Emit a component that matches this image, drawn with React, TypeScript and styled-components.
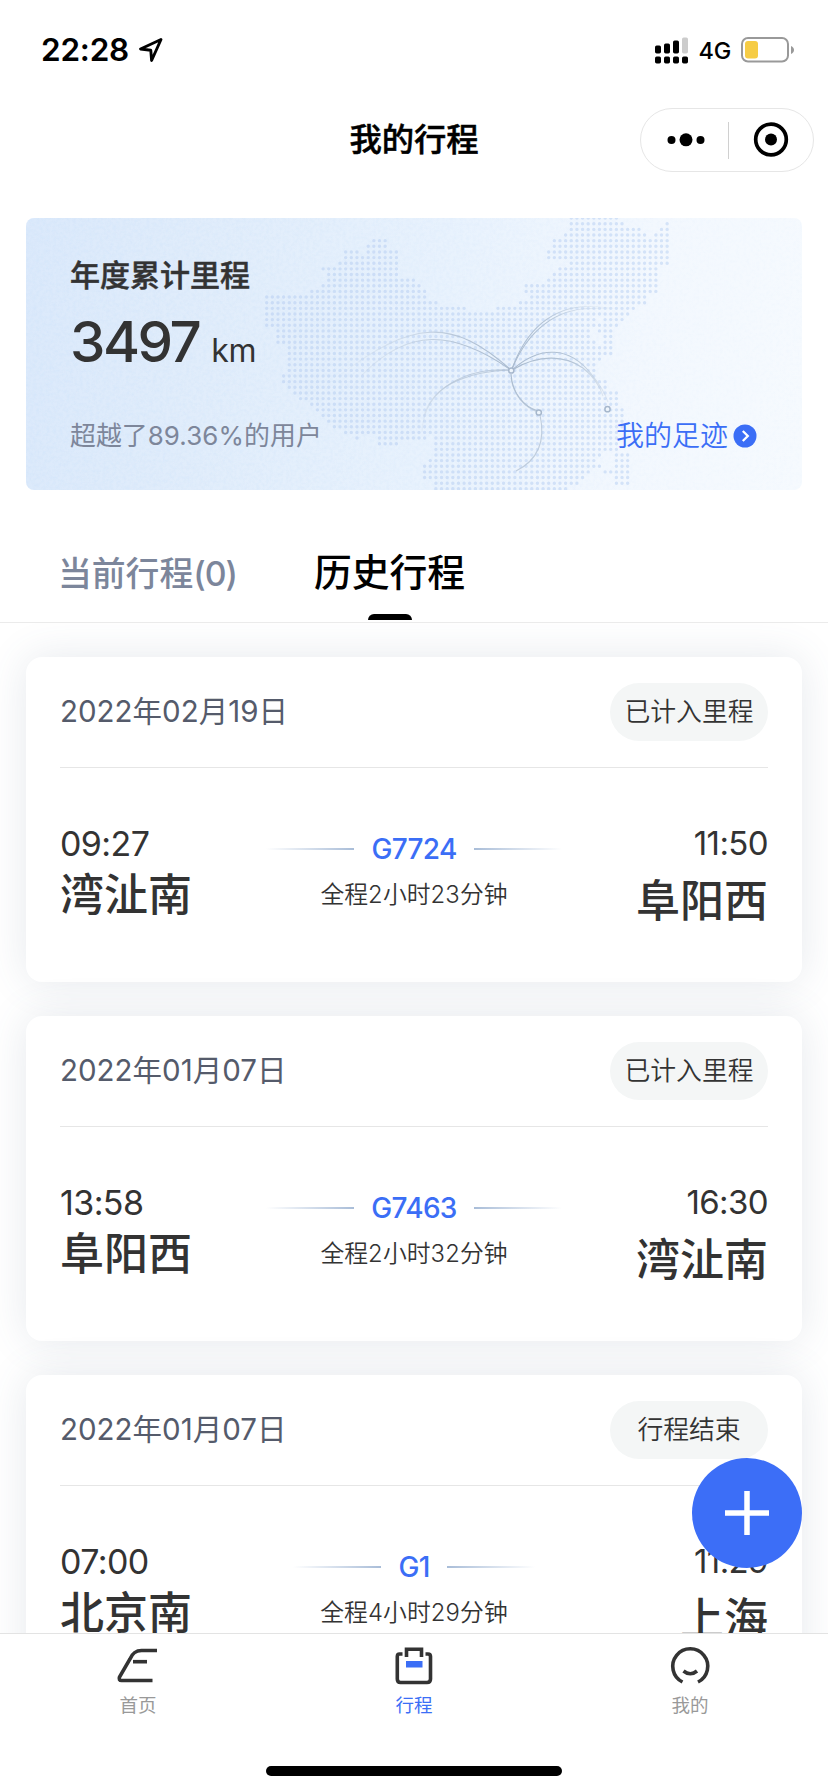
import React from "react";
import styled, { createGlobalStyle } from "styled-components";

const GlobalStyle = createGlobalStyle`
  * { box-sizing: border-box; }
  html, body { margin: 0; padding: 0; background: #fff; }
  body {
    font-family: Inter, "Noto Sans CJK SC", sans-serif;
    color: #333;
    -webkit-font-smoothing: antialiased;
  }
`;

const Screen = styled.div`
  position: relative;
  display: flex;
  flex-direction: column;
  width: 828px;
  height: 1792px;
  overflow: hidden;
  background: #fff;
`;

/* ---------- shared text ---------- */

const LatinRun = styled.span<{ $tracking: number }>`
  letter-spacing: ${(p) => p.$tracking}em;
`;

/* Adjusts the tracking of digits and latin letters that sit among Chinese characters. */
function Mixed({ children, tracking = 0 }: { children: string; tracking?: number }) {
  return (
    <>
      {children.split(/([\x20-\x7e]+)/).map((part, i) =>
        i % 2 ? (
          <LatinRun key={i} $tracking={tracking}>
            {part}
          </LatinRun>
        ) : (
          part
        )
      )}
    </>
  );
}

/* ---------- status bar ---------- */

const StatusBar = styled.header`
  flex: none;
  display: flex;
  align-items: center;
  justify-content: space-between;
  height: 100px;
  padding: 0 33px 0 41px;
`;

const StatusGroup = styled.div`
  display: flex;
  align-items: center;
`;

const Clock = styled.span`
  font-size: 31.5px;
  font-weight: 600;
  letter-spacing: -0.2px;
  line-height: 40px;
  color: #000;
  margin-right: 9px;
`;

const Network = styled.span`
  font-size: 23.5px;
  font-weight: 500;
  line-height: 30px;
  letter-spacing: -0.3px;
  color: #000;
  margin: 2px 10px 0 10px;
`;

/* ---------- nav bar ---------- */

const NavBar = styled.div`
  flex: none;
  display: grid;
  grid-template-columns: 1fr auto 1fr;
  align-items: center;
  height: 80px;
  padding-right: 14px;
  padding-left: 14px;
`;

const NavTitle = styled.h1`
  grid-column: 2;
  margin: 0;
  font-size: 32.3px;
  line-height: 44px;
  font-weight: 500;
  -webkit-text-stroke: 0.5px currentColor;
  color: #000;
`;

const Capsule = styled.div`
  justify-self: end;
  display: flex;
  align-items: center;
  width: 174px;
  height: 64px;
  border: 1px solid #e6e6e6;
  border-radius: 32px;
`;

const CapsuleHalf = styled.div`
  flex: 1;
  display: flex;
  justify-content: center;
  padding-left: 3px;
  & + & {
    height: 37px;
    padding-left: 1px;
    align-items: center;
    border-left: 1px solid #d0d0d0;
  }
`;

/* ---------- mileage card ---------- */

const Mileage = styled.section`
  flex: none;
  position: relative;
  height: 272px;
  margin: 38px 26px 0;
  padding: 35px 45px 0 44px;
  border-radius: 8px;
  overflow: hidden;
  background: linear-gradient(97deg, #dbe9fb 0%, #e1edfb 25%, #e8f2fd 52%, #f3f8fe 78%, #f6fafe 100%);
`;

const MapArt = styled.svg`
  position: absolute;
  inset: 0;
`;

const MileageBody = styled.div`
  position: relative;
  display: flex;
  flex-direction: column;
`;

const MileageTitle = styled.h2`
  margin: 0;
  font-size: 30px;
  line-height: 44px;
  font-weight: 500;
  -webkit-text-stroke: 0.5px currentColor;
`;

const MileageValue = styled.div`
  display: flex;
  align-items: baseline;
  height: 70px;
  line-height: 70px;
  margin-top: 10px;
`;

const Distance = styled.span`
  font-size: 56.5px;
  font-weight: 550;
  letter-spacing: -2.5px;
`;

const Unit = styled.span`
  margin-left: 12px;
  font-size: 32px;
  font-weight: 370;
  letter-spacing: -0.3px;
`;

const MileageFooter = styled.div`
  display: flex;
  align-items: center;
  justify-content: space-between;
  height: 40px;
  margin-top: 39px;
`;

const Rank = styled.span`
  font-size: 25.9px;
  line-height: 36px;
  font-weight: 370;
  color: #7d869a;
`;

const FootprintLink = styled.a`
  display: flex;
  align-items: center;
  gap: 5px;
  font-size: 28px;
  line-height: 38px;
  font-weight: 350;
  color: #3b6ef6;
`;

/* ---------- tabs ---------- */

const Tabs = styled.nav`
  flex: none;
  display: flex;
  height: 133px;
  padding-left: 58px;
  border-bottom: 1px solid #ebebeb;
`;

const Tab = styled.div<{ $active?: boolean }>`
  position: relative;
  height: 132px;
  padding-top: ${(p) => (p.$active ? 56 : 58)}px;
  margin-right: 77px;
  font-size: ${(p) => (p.$active ? 37.8 : 33.8)}px;
  line-height: 52px;
  font-weight: 500;
  color: ${(p) => (p.$active ? "#000" : "#7c869b")};
  white-space: nowrap;
`;

const TabMark = styled.i`
  position: absolute;
  left: 50%;
  bottom: 2px;
  width: 44px;
  height: 6px;
  margin-left: -21px;
  border-radius: 6px 6px 0 0;
  background: #000;
`;

/* ---------- trips ---------- */

const TripList = styled.main`
  flex: 1;
  min-height: 0;
  overflow: hidden;
  display: flex;
  flex-direction: column;
  gap: 34px;
  padding: 34px 26px 0;
`;

const TripCard = styled.article`
  flex: none;
  height: 325px;
  padding: 0 34px;
  border-radius: 16px;
  background: #fff;
  box-shadow: 0 0 42px rgba(80, 100, 130, 0.14);
`;

const TripHead = styled.div`
  display: flex;
  align-items: center;
  justify-content: space-between;
  height: 111px;
  border-bottom: 1px solid #e6e6e6;
`;

const TripDate = styled.span`
  padding-bottom: 2px;
  font-size: 29.5px;
  line-height: 40px;
  font-weight: 370;
  color: #555b6b;
`;

const Badge = styled.span`
  display: flex;
  align-items: center;
  justify-content: center;
  width: 158px;
  height: 58px;
  border-radius: 29px;
  font-size: 25.8px;
  line-height: 36px;
  font-weight: 350;
  background: #f4f6f6;
`;

const Route = styled.div`
  display: grid;
  grid-template-columns: 1fr 300px 1fr;
  padding-top: 52px;
`;

const Stop = styled.div<{ $end?: boolean }>`
  display: flex;
  flex-direction: column;
  align-items: ${(p) => (p.$end ? "flex-end" : "flex-start")};
  gap: ${(p) => (p.$end ? 10 : 2)}px;
`;

const StopTime = styled.span<{ $end?: boolean }>`
  font-size: ${(p) => (p.$end ? 33 : 34)}px;
  line-height: ${(p) => (p.$end ? 46 : 48)}px;
  font-weight: 370;
  letter-spacing: -0.6px;
`;

const Station = styled.span`
  font-size: 44px;
  line-height: 50px;
  font-weight: 500;
  white-space: nowrap;
`;

const Middle = styled.div`
  display: flex;
  flex-direction: column;
  align-items: center;
  padding-top: 11px;
`;

const TrainRow = styled.div`
  display: flex;
  align-items: center;
  gap: 17px;
  height: 36px;
`;

const Train = styled.span`
  font-size: 28px;
  line-height: 36px;
  font-weight: 500;
  letter-spacing: -0.7px;
  color: #3b6ef6;
`;

const Fade = styled.i<{ $dir: "left" | "right" }>`
  width: 88px;
  height: 2px;
  background: linear-gradient(to ${(p) => p.$dir}, #a9bdd8, rgba(169, 189, 216, 0));
`;

const Duration = styled.span`
  margin-top: 12px;
  font-size: 23.8px;
  line-height: 32px;
  font-weight: 360;
`;

const AddButton = styled.button`
  position: absolute;
  left: 692px;
  top: 1458px;
  display: flex;
  width: 110px;
  height: 110px;
  padding: 0;
  border: 0;
  border-radius: 50%;
  background: #3c6ef7;
`;

/* ---------- bottom bar ---------- */

const BottomBar = styled.footer`
  flex: none;
  display: flex;
  flex-direction: column;
  align-items: center;
  justify-content: space-between;
  height: 159px;
  padding-bottom: 16px;
  border-top: 1px solid #e3e3e3;
  background: #fff;
`;

const BottomItems = styled.div`
  display: grid;
  grid-template-columns: repeat(3, 1fr);
  width: 100%;
`;

const BottomItem = styled.div<{ $active?: boolean }>`
  display: flex;
  flex-direction: column;
  align-items: center;
  padding-top: 9px;
  font-size: 18.5px;
  line-height: 28px;
  color: ${(p) => (p.$active ? "#3b6ef6" : "#999")};
  & > svg { margin-bottom: 6px; }
`;

const HomeIndicator = styled.div`
  width: 296px;
  height: 10px;
  border-radius: 5px;
  background: #000;
`;

/* ---------- map drawing ---------- */

/* Column spans filled with dots, one entry per dot row from top to bottom. */
const MAP_ROWS: number[][] = [
  [54, 62], [54, 63, 71, 71], [54, 66, 70, 71], [53, 67, 69, 71],
  [19, 21, 51, 71], [18, 21, 51, 71], [14, 16, 18, 23, 50, 71], [14, 23, 50, 71],
  [13, 23, 54, 71], [10, 23, 52, 69], [11, 23, 51, 69], [11, 26, 50, 69],
  [10, 27, 46, 69], [8, 28, 46, 69], [0, 28, 47, 67], [0, 30, 45, 67],
  [0, 35, 41, 65], [0, 64], [0, 58, 60, 63], [0, 62],
  [2, 57, 59, 61], [2, 57, 60, 61], [2, 58, 60, 61], [4, 61],
  [4, 61], [4, 59], [4, 58], [4, 58], [3, 58], [3, 60], [4, 60], [5, 62],
  [6, 62], [8, 62], [9, 63], [10, 63], [11, 63], [12, 63], [14, 62], [16, 16, 20, 28, 30, 62],
  [20, 23, 30, 62], [30, 62], [30, 59, 62, 64], [29, 58, 62, 64], [28, 59, 62, 64],
  [28, 57, 60, 61, 62, 64], [28, 56, 62, 64], [30, 55, 62, 64], [30, 53],
];
const PITCH = 5.64;

function dotSegments() {
  const segments: string[] = [];
  MAP_ROWS.forEach((spans, k) => {
    const y = (218.1 + k * PITCH).toFixed(2);
    for (let i = 0; i < spans.length; i += 2) {
      const x = (266.7 + spans[i] * PITCH).toFixed(2);
      const len = ((spans[i + 1] - spans[i]) * PITCH + 0.2).toFixed(2);
      segments.push(`M${x} ${y}h${len}`);
    }
  });
  return segments;
}

function ChinaMap() {
  return (
    <MapArt width="776" height="272" viewBox="26 218 776 272" fill="none">
      <defs>
        <linearGradient id="dotFade" gradientUnits="userSpaceOnUse" x1="266" y1="0" x2="670" y2="0">
          <stop offset="0" stopColor="#fff" />
          <stop offset="1" stopColor="#fff" stopOpacity=".75" />
        </linearGradient>
        <mask id="dotMask" maskUnits="userSpaceOnUse" x="26" y="218" width="776" height="272">
          <rect x="26" y="218" width="776" height="272" fill="url(#dotFade)" />
        </mask>
        <radialGradient id="arc" gradientUnits="userSpaceOnUse" cx="511" cy="370" r="178">
          <stop offset="0" stopColor="#a9bace" />
          <stop offset=".35" stopColor="#b6c5d7" />
          <stop offset="1" stopColor="#c8d5e4" stopOpacity="0" />
        </radialGradient>
        <radialGradient id="arcShort" gradientUnits="userSpaceOnUse" cx="511" cy="370" r="122">
          <stop offset="0" stopColor="#a9bace" />
          <stop offset=".5" stopColor="#b4c4d6" />
          <stop offset="1" stopColor="#c8d5e4" stopOpacity="0" />
        </radialGradient>
        <filter id="grain" x="0" y="0" width="100%" height="100%">
          <feTurbulence type="fractalNoise" baseFrequency="0.3" numOctaves="2" seed="4" />
          <feColorMatrix values="0 0 0 0 0.62  0 0 0 0 0.77  0 0 0 0 0.96  0 0 0 1.6 -0.62" />
        </filter>
        <linearGradient id="grainFade" x1="0" x2="1" y1="0" y2="0">
          <stop offset="0" stopColor="#fff" />
          <stop offset=".85" stopColor="#fff" stopOpacity=".15" />
        </linearGradient>
        <mask id="grainMask">
          <rect x="26" y="218" width="776" height="272" fill="url(#grainFade)" />
        </mask>
      </defs>
      <g mask="url(#grainMask)">
        <rect x="26" y="218" width="776" height="272" filter="url(#grain)" opacity=".6" />
      </g>
      <g mask="url(#dotMask)" stroke="#cadcf6" strokeWidth="3.4" strokeLinecap="round" strokeDasharray={`0 ${PITCH}`}>
        {dotSegments().map((d) => (
          <path key={d} d={d} />
        ))}
      </g>
      <g stroke="url(#arcShort)" strokeWidth="1.1">
        <path d="M512 369C526 330 552 306 590 306.500Q606 307 616 309" />
        <path d="M512 369C528 330 556 309 590 308.500Q602 308 612 308" />
        <path d="M512 370C540 345 570 346 592 375Q603 388 608 402" />
        <path d="M512 370C540 353 566 356 583 368Q598 380 603 396" />
        <path d="M511 370C470 368 424 385 422 432" strokeOpacity=".7" />
        <path d="M511 370C478 371 434 380 424 416" strokeOpacity=".7" />
        <path d="M511 374C512 393 524 407 538 411" />
        <path d="M511 378C514 397 526 408 538 412" strokeOpacity=".6" />
      </g>
      <g stroke="url(#arc)" strokeWidth="1.1">
        <path d="M511 370C452 317 412 320 337 377" />
        <path d="M511 370C452 329 408 328 362 375" />
      </g>
      <path d="M540 415C546 442 538 460 516 471" stroke="#b5c4d6" strokeWidth="1.1" strokeOpacity=".8" />
      <g stroke="#a6b7cc" strokeWidth="1.5" fill="#eef5fc">
        <circle cx="511.300" cy="370.500" r="2.600" />
        <circle cx="538.800" cy="412.500" r="2.600" />
        <circle cx="607.500" cy="409.200" r="2.600" />
      </g>
    </MapArt>
  );
}

/* ---------- data ---------- */

interface Trip {
  date: string;
  badge: string;
  from: [string, string];
  to: [string, string];
  train: string;
  duration: string;
}

const TRIPS: Trip[] = [
  { date: "2022年02月19日", badge: "已计入里程", from: ["09:27", "湾沚南"], to: ["11:50", "阜阳西"], train: "G7724", duration: "全程2小时23分钟" },
  { date: "2022年01月07日", badge: "已计入里程", from: ["13:58", "阜阳西"], to: ["16:30", "湾沚南"], train: "G7463", duration: "全程2小时32分钟" },
  { date: "2022年01月07日", badge: "行程结束", from: ["07:00", "北京南"], to: ["11:29", "上海"], train: "G1", duration: "全程4小时29分钟" },
];

function TripItem({ trip }: { trip: Trip }) {
  return (
    <TripCard>
      <TripHead>
        <TripDate><Mixed>{trip.date}</Mixed></TripDate>
        <Badge>{trip.badge}</Badge>
      </TripHead>
      <Route>
        <Stop>
          <StopTime>{trip.from[0]}</StopTime>
          <Station>{trip.from[1]}</Station>
        </Stop>
        <Middle>
          <TrainRow>
            <Fade $dir="left" />
            <Train>{trip.train}</Train>
            <Fade $dir="right" />
          </TrainRow>
          <Duration><Mixed tracking={0.01}>{trip.duration}</Mixed></Duration>
        </Middle>
        <Stop $end>
          <StopTime $end>{trip.to[0]}</StopTime>
          <Station>{trip.to[1]}</Station>
        </Stop>
      </Route>
    </TripCard>
  );
}

export default function App() {
  return (
    <Screen>
      <GlobalStyle />
      <StatusBar>
        <StatusGroup>
          <Clock>22:28</Clock>
          <svg width="26" height="26" viewBox="0 0 26 26" fill="none" stroke="#000" strokeWidth="2.9" strokeLinejoin="round">
            <path d="M23 2.500L2.500 12L12.800 13.300L13.600 23.500Z" />
          </svg>
        </StatusGroup>
        <StatusGroup>
          <svg width="34" height="27" viewBox="0 0 34 27" fill="#000">
            <rect x="0" y="8.500" width="6" height="8" rx="1.700" />
            <rect x="9" y="6.500" width="6" height="10" rx="1.700" />
            <rect x="18" y="3.500" width="6" height="13" rx="1.700" />
            <rect x="27" y="0.500" width="6" height="16" rx="1.700" fill="#ccc" />
            <rect x="0" y="19.500" width="6" height="7" rx="1.700" />
            <rect x="9" y="19.500" width="6" height="7" rx="1.700" />
            <rect x="18" y="19.500" width="6" height="7" rx="1.700" />
            <rect x="27" y="19.500" width="6" height="7" rx="1.700" />
          </svg>
          <Network>4G</Network>
          <svg width="54" height="26" viewBox="0 0 54 26" fill="none">
            <rect x="1" y="1" width="46" height="23.500" rx="6" stroke="#999" strokeWidth="2" />
            <rect x="4" y="4" width="13" height="17.500" rx="3" fill="#f6cc45" />
            <path d="M50 9C54 10.500 54 15.500 50 17Z" fill="#999" />
          </svg>
        </StatusGroup>
      </StatusBar>

      <NavBar>
        <NavTitle>我的行程</NavTitle>
        <Capsule>
          <CapsuleHalf>
            <svg width="38" height="14" viewBox="0 0 38 14">
              <circle cx="4.500" cy="7" r="4" />
              <circle cx="19" cy="6.800" r="6.500" />
              <circle cx="33.500" cy="7" r="4" />
            </svg>
          </CapsuleHalf>
          <CapsuleHalf>
            <svg width="36" height="36" viewBox="0 0 36 36">
              <circle cx="18" cy="17.500" r="15.300" fill="none" stroke="#000" strokeWidth="3.700" />
              <circle cx="18" cy="17.500" r="6" />
            </svg>
          </CapsuleHalf>
        </Capsule>
      </NavBar>

      <Mileage>
        <ChinaMap />
        <MileageBody>
          <MileageTitle>年度累计里程</MileageTitle>
          <MileageValue>
            <Distance>3497</Distance>
            <Unit>km</Unit>
          </MileageValue>
          <MileageFooter>
            <Rank><Mixed tracking={0.005}>超越了89.36%的用户</Mixed></Rank>
            <FootprintLink>
              我的足迹
              <svg width="24" height="24" viewBox="0 0 24 24" fill="none">
                <circle cx="12" cy="12" r="11.500" fill="#3b6ef6" />
                <path d="M9.800 7L14.800 12L9.800 17" stroke="#fff" strokeWidth="2.300" />
              </svg>
            </FootprintLink>
          </MileageFooter>
        </MileageBody>
      </Mileage>

      <Tabs>
        <Tab><Mixed tracking={-0.03}>当前行程(0)</Mixed></Tab>
        <Tab $active>
          历史行程
          <TabMark />
        </Tab>
      </Tabs>

      <TripList>
        {TRIPS.map((trip) => (
          <TripItem key={trip.train} trip={trip} />
        ))}
      </TripList>

      <AddButton aria-label="添加行程">
        <svg width="110" height="110" viewBox="0 0 110 110" stroke="#fff" strokeWidth="5.500">
          <path d="M33 55H77M55 33V77" />
        </svg>
      </AddButton>

      <BottomBar>
        <BottomItems>
          <BottomItem>
            <svg width="44" height="42" viewBox="0 0 44 42" fill="none" stroke="#333" strokeWidth="3.600">
              <path d="M41 7.500H25.500C19.500 7.500 16.500 10 14 16L3.500 34C2.700 36 3.500 37.500 5.500 37.500H36.500" />
              <path d="M17 18.700H31" />
            </svg>
            首页
          </BottomItem>
          <BottomItem $active>
            <svg width="44" height="42" viewBox="0 0 44 42" fill="none" stroke="#333" strokeWidth="3.600">
              <path d="M10.500 11H7.500Q5.300 11 5.300 13.500V36Q5.300 39.500 8.500 39.500H35Q38.500 39.500 38.500 36V13.500Q38.500 11 36 11H33.500" />
              <path d="M14.500 14V6.200H29.500V14" />
              <rect x="14" y="18" width="16.500" height="6.500" fill="#3b6ef6" stroke="none" />
            </svg>
            行程
          </BottomItem>
          <BottomItem>
            <svg width="44" height="42" viewBox="0 0 44 42" fill="none" stroke="#333" strokeWidth="3.600">
              <path d="M14.500 39A17.500 17.500 0 1 1 30 39" />
              <path d="M15.500 28Q22.300 33.500 29 28" />
            </svg>
            我的
          </BottomItem>
        </BottomItems>
        <HomeIndicator />
      </BottomBar>
    </Screen>
  );
}
